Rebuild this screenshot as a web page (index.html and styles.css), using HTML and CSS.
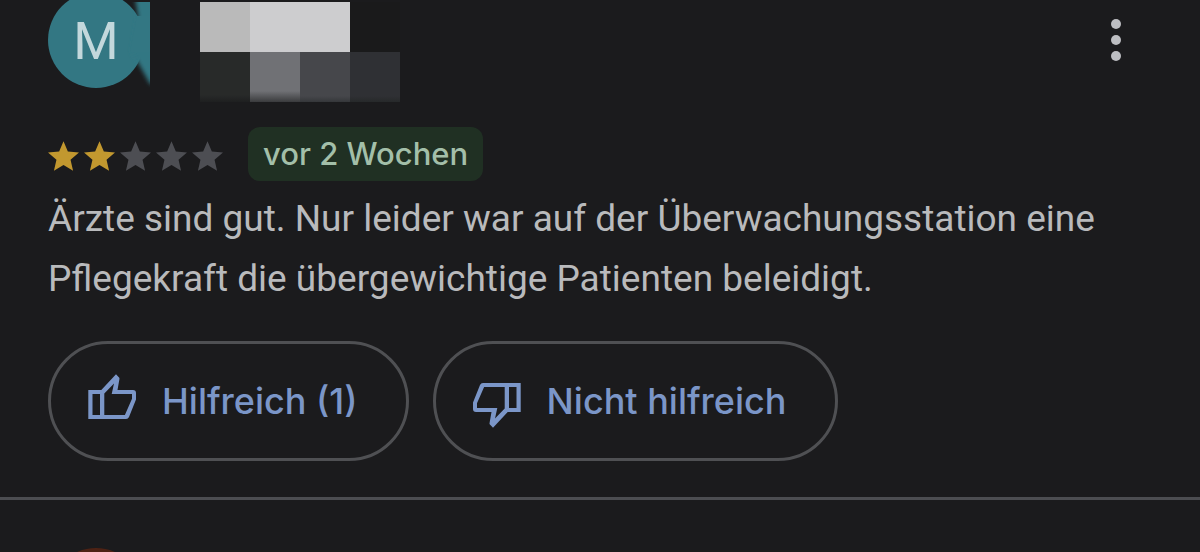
FILE: index.html
```html
<!DOCTYPE html>
<html lang="de">
<head>
<meta charset="utf-8">
<meta name="viewport" content="width=device-width, initial-scale=1">
<title>Rezension</title>
<link rel="stylesheet" href="styles.css">
</head>
<body>
<svg class="defs" aria-hidden="true">
  <symbol id="star" viewBox="2 2 20 19"><path d="M12 17.27L18.18 21l-1.64-7.03L22 9.24l-7.19-.61L12 2 9.19 8.63 2 9.24l5.46 4.73L5.82 21z"/></symbol>
  <symbol id="thumb" viewBox="0 0 48 58"><path fill-rule="evenodd" d="M.3 18H13.3L28 2.3L31.3 5.7Q31.6 6.3 31.4 7.2L29.5 18H45Q48 18 48 21V27.5L41 45Q40.2 47 38 47H.3ZM4.5 22V43H12V22ZM16.3 21.5V43H36.9L44 26.8V22H23.7L26 11.5Z"/></symbol>
</svg>
<main class="reviews">
  <article class="review">
    <header class="author">
      <div class="avatar">
        <svg class="smear" viewBox="0 0 24 90" aria-hidden="true">
          <defs>
            <filter id="soft" x="-50%" y="-20%" width="200%" height="140%"><feGaussianBlur stdDeviation="2"/></filter>
          </defs>
          <path filter="url(#soft)" d="M8-10L12 14L6 50L24 82H34V-10Z"/><path d="M11 14H24V50H4Z"/>
        </svg>
        <span class="initial">M</span>
      </div>
      <div class="name">
        <i class="c1"></i><i class="c2"></i><i class="c2"></i><i class="c3"></i>
        <i class="c4"></i><i class="c5"></i><i class="c6"></i><i class="c7"></i>
      </div>
      <button class="more" type="button" aria-label="Weitere Optionen">
        <svg viewBox="0 0 10 42" aria-hidden="true"><circle cx="5" cy="5" r="5"/><circle cx="5" cy="21" r="5"/><circle cx="5" cy="37" r="5"/></svg>
      </button>
    </header>
    <div class="meta">
      <div class="stars" role="img" aria-label="2 von 5 Sternen">
        <svg class="on"><use href="#star"/></svg>
        <svg class="on"><use href="#star"/></svg>
        <svg><use href="#star"/></svg>
        <svg><use href="#star"/></svg>
        <svg><use href="#star"/></svg>
      </div>
      <span class="badge">vor 2 Wochen</span>
    </div>
    <p class="text">Ärzte sind gut. Nur leider war auf der Überwachungsstation eine Pflegekraft die übergewichtige Patienten beleidigt.</p>
    <div class="actions">
      <button class="pill" type="button"><svg aria-hidden="true"><use href="#thumb"/></svg>Hilfreich (1)</button>
      <button class="pill" type="button"><svg class="down" aria-hidden="true"><use href="#thumb"/></svg>Nicht hilfreich</button>
    </div>
  </article>
  <article class="review next">
    <div class="avatar rust"></div>
  </article>
</main>
</body>
</html>
```
FILE: styles.css
```css
* { box-sizing: border-box; }
body {
  margin: 0;
  background: #1b1b1d;
  color: #b9babc;
  font-family: Roboto, "Liberation Sans", sans-serif;
}
.defs { position: absolute; width: 0; height: 0; }
.reviews { height: 100vh; overflow: hidden; }
.review { padding: 0 48px 36px; border-bottom: 3px solid #4c4d51; }
.author { display: flex; align-items: flex-start; margin-bottom: 25px; }
.avatar {
  position: relative;
  flex: none;
  width: 96px;
  height: 96px;
  margin-top: -8px;
  border-radius: 50%;
  background: #337783;
  display: flex;
  align-items: center;
  justify-content: center;
}
.smear { position: absolute; left: 78px; top: 10px; width: 24px; height: 90px; fill: #337783; }
.initial { position: relative; padding-top: 4px; font-size: 52px; line-height: 60px; color: #c3d8dc; }
.name {
  display: grid;
  grid-template-columns: repeat(4, 50px);
  grid-auto-rows: 50px;
  margin: 2px 0 0 56px;
}
.c1 { background: #bababa; }
.c2 { background: #cdcdcf; }
.c3 { background: #1a1a1b; }
.c4 { background: linear-gradient(#282a29 86%, #1e1f20); }
.c5 { background: linear-gradient(#707175 78%, #3a3b3d); }
.c6 { background: linear-gradient(#46474b 88%, #35373a); }
.c7 { background: linear-gradient(#2f3034 88%, #26292a); }
.more {
  width: 72px;
  height: 80px;
  margin-left: auto;
  padding: 0;
  border: 0;
  background: none;
  display: flex;
  align-items: center;
  justify-content: center;
}
.more svg { width: 10px; height: 42px; fill: #bdbec2; }
.meta { display: flex; align-items: center; gap: 25px; }
.stars { display: flex; gap: 5px; padding-top: 4px; }
.stars svg { width: 31px; height: 30px; fill: #4d4e53; }
.stars .on { fill: #c2982f; }
.badge {
  padding: 0 15px;
  border-radius: 12px;
  background: #203023;
  color: #a3bfa9;
  font-family: Inter, Roboto, sans-serif;
  font-size: 31px;
  font-weight: 500;
  line-height: 54px;
}
.text { margin: 8px 0 32px; font-size: 37px; line-height: 60px; }
.actions { display: flex; flex-wrap: wrap; gap: 24px; }
.pill {
  display: flex;
  align-items: center;
  gap: 26px;
  min-height: 120px;
  padding: 0 48px 0 37px;
  border: 3px solid #4f5053;
  border-radius: 60px;
  background: none;
  color: #7b96c8;
  font-family: Inter, Roboto, sans-serif;
  font-size: 36px;
  font-weight: 500;
}
.pill svg { width: 48px; height: 58px; fill: currentColor; }
.pill .down { transform: rotate(180deg); }
.next { padding-top: 56px; border: 0; }
.rust { background: #4e2214; }
```
